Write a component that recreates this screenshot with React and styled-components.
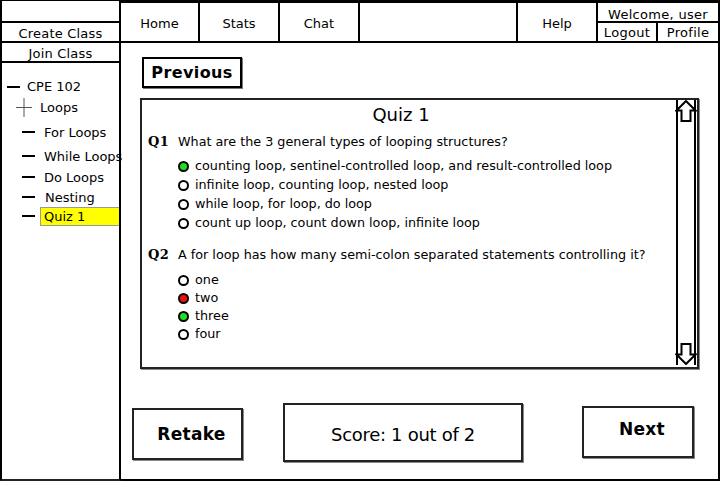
import React from 'react';
import styled, { createGlobalStyle } from 'styled-components';

const GlobalStyle = createGlobalStyle`
  html, body {
    margin: 0;
    padding: 0;
    background: #fff;
  }
  * {
    box-sizing: border-box;
  }
  body {
    font-family: "DejaVu Sans", Verdana, sans-serif;
    color: #000;
  }
`;

const questions = [
  {
    label: 'Q1',
    text: 'What are the 3 general types of looping structures?',
    options: [
      { text: 'counting loop, sentinel-controlled loop, and result-controlled loop', mark: 'right' },
      { text: 'infinite loop, counting loop, nested loop' },
      { text: 'while loop, for loop, do loop' },
      { text: 'count up loop, count down loop, infinite loop' },
    ],
  },
  {
    label: 'Q2',
    text: 'A for loop has how many semi-colon separated statements controlling it?',
    options: [
      { text: 'one' },
      { text: 'two', mark: 'wrong' },
      { text: 'three', mark: 'right' },
      { text: 'four' },
    ],
  },
];

// spacing above each lesson differs a little in the mockup
const lessons = [
  { name: 'For Loops', top: 6 },
  { name: 'While Loops', top: 6 },
  { name: 'Do Loops', top: 3 },
  { name: 'Nesting', top: 2, nudge: 3 },
  { name: 'Quiz 1', top: 1, active: true },
];

const App = () => {
  return (
    <>
      <GlobalStyle />
      <Frame>
        <Sidebar>
          <SideRow $height={23} $first />
          <SideRow $height={20}>Create Class</SideRow>
          <SideRow $height={20}>Join Class</SideRow>
          <Tree>
            <TreeItem $indent={7} $top={12}>
              <Dash />
              <span>CPE 102</span>
            </TreeItem>
            <TreeItem $indent={16} $top={2}>
              <Plus viewBox="0 0 16 19">
                <path d="M0 9.5 H16 M8 0 V19" stroke="#555" strokeWidth="1" fill="none" />
              </Plus>
              <LoopsLabel>Loops</LoopsLabel>
            </TreeItem>
            {lessons.map((l) => (
              <TreeItem key={l.name} $indent={22} $top={l.top} $child>
                <Dash />
                <Leaf $active={l.active} $nudge={l.nudge}>{l.name}</Leaf>
              </TreeItem>
            ))}
          </Tree>
        </Sidebar>

        <Main>
          <TopNav>
            <NavItem $width={79}>Home</NavItem>
            <NavItem $width={80}>Stats</NavItem>
            <NavItem $width={80}>Chat</NavItem>
            <NavItem $grow />
            <NavItem $width={80}>Help</NavItem>
            <UserBox>
              <Welcome>Welcome, user</Welcome>
              <UserLinks>
                <UserLink $width={60}>Logout</UserLink>
                <UserLink $last>Profile</UserLink>
              </UserLinks>
            </UserBox>
          </TopNav>

          <Content>
            <PrevButton>Previous</PrevButton>

            <QuizPanel>
              <QuizBody>
                <QuizTitle>Quiz 1</QuizTitle>
                {questions.map((q, i) => (
                  <Question key={q.label} $first={i === 0}>
                    <QuestionLine>
                      <QLabel>{q.label}</QLabel>
                      <span>{q.text}</span>
                    </QuestionLine>
                    <Options $tight={i === 1}>
                      {q.options.map((o) => (
                        <Option key={o.text}>
                          <Radio $mark={o.mark} />
                          <span>{o.text}</span>
                        </Option>
                      ))}
                    </Options>
                  </Question>
                ))}
              </QuizBody>
              <ScrollBar>
                <Arrow viewBox="0 0 22 22">
                  <path d="M11 1 L20.5 10.5 L15.5 10.5 L15.5 21 L6.5 21 L6.5 10.5 L1.5 10.5 Z" fill="#fff" stroke="#000" strokeWidth="2" strokeLinejoin="miter" />
                </Arrow>
                <Arrow viewBox="0 0 22 22">
                  <path d="M11 21 L20.5 11.5 L15.5 11.5 L15.5 1 L6.5 1 L6.5 11.5 L1.5 11.5 Z" fill="#fff" stroke="#000" strokeWidth="2" strokeLinejoin="miter" />
                </Arrow>
              </ScrollBar>
            </QuizPanel>

            <ActionRow>
              <ActionButton $width={111} $height={52} $top={39} $bold>Retake</ActionButton>
              <ActionButton $width={240} $height={59} $top={34} $gap={40} $shift={2}>Score: 1 out of 2</ActionButton>
              <ActionButton $width={112} $height={52} $top={37} $gap={59} $bold $shift={-3}>Next</ActionButton>
            </ActionRow>
          </Content>
        </Main>
      </Frame>
    </>
  );
};

const Frame = styled.div`
  display: flex;
  width: 720px;
  height: 481px;
  font-size: 13px;
`;

const Sidebar = styled.div`
  width: 121px;
  flex-shrink: 0;
  display: flex;
  flex-direction: column;
  border-left: 2px solid #000;
  border-right: 2px solid #000;
  border-bottom: 2px solid #222;
`;

const SideRow = styled.div`
  height: ${(p) => p.$height}px;
  border-bottom: 2px solid #000;
  border-top: ${(p) => (p.$first ? '1px solid #000' : 'none')};
  display: flex;
  align-items: center;
  justify-content: center;
  padding-top: 3px;
  letter-spacing: 0.2px;
`;

const Tree = styled.div`
  display: flex;
  flex-direction: column;
  padding-top: 2px;
`;

const TreeItem = styled.div`
  display: flex;
  align-items: center;
  height: ${(p) => (p.$child ? 18 : 19)}px;
  margin-top: ${(p) => p.$top}px;
  padding-left: ${(p) => p.$indent - 2}px;
  gap: 7px;
  white-space: nowrap;
`;

const Dash = styled.span`
  display: inline-block;
  width: 13px;
  height: 2px;
  background: #000;
  flex-shrink: 0;
`;

const Plus = styled.svg`
  width: 16px;
  height: 19px;
  flex-shrink: 0;
`;

const LoopsLabel = styled.span`
  margin-left: 1px;
`;

const Leaf = styled.span`
  display: inline-block;
  height: 19px;
  padding-left: ${(p) => (p.$active ? 3 : 0)}px;
  margin-left: ${(p) => (p.$active ? -2 : p.$nudge || 2)}px;
  width: ${(p) => (p.$active ? '83px' : 'auto')};
  background: ${(p) => (p.$active ? '#ffff00' : 'transparent')};
  border: ${(p) => (p.$active ? '1px solid #999' : 'none')};
  border-right: none;
  line-height: ${(p) => (p.$active ? '17px' : '19px')};
`;

const Main = styled.div`
  flex: 1;
  display: flex;
  flex-direction: column;
  border-right: 2px solid #000;
  border-bottom: 2px solid #000;
  border-top: 1px solid #000;
`;

const TopNav = styled.div`
  display: flex;
  height: 42px;
  border-top: 2px solid #000;
  border-bottom: 2px solid #000;
`;

const NavItem = styled.div`
  width: ${(p) => (p.$grow ? 'auto' : `${p.$width}px`)};
  flex: ${(p) => (p.$grow ? 1 : '0 0 auto')};
  border-right: 2px solid #000;
  display: flex;
  align-items: center;
  justify-content: center;
  padding-top: 2px;
`;

const UserBox = styled.div`
  width: 120px;
  display: flex;
  flex-direction: column;
`;

const Welcome = styled.div`
  height: 20px;
  border-bottom: 2px solid #000;
  display: flex;
  align-items: center;
  justify-content: center;
  padding-top: 5px;
  letter-spacing: 0.3px;
`;

const UserLinks = styled.div`
  display: flex;
  flex: 1;
`;

const UserLink = styled.div`
  width: ${(p) => (p.$width ? `${p.$width}px` : 'auto')};
  flex: ${(p) => (p.$last ? 1 : '0 0 auto')};
  border-right: ${(p) => (p.$last ? 'none' : '2px solid #000')};
  display: flex;
  align-items: center;
  justify-content: center;
  padding-top: 1px;
  letter-spacing: 0.3px;
`;

const Content = styled.div`
  flex: 1;
  display: flex;
  flex-direction: column;
  padding: 14px 0 0 19px;
`;

const PrevButton = styled.div`
  width: 100px;
  height: 31px;
  margin-left: 2px;
  border: 2px solid #000;
  display: flex;
  align-items: center;
  justify-content: center;
  font-weight: bold;
  font-size: 16px;
  letter-spacing: 0.4px;
  box-shadow: 1px 1px 0 #777;
`;

const QuizPanel = styled.div`
  margin-top: 10px;
  width: 559px;
  height: 271px;
  border: 2px solid #222;
  box-shadow: 1px 1px 0 #888;
  display: flex;
`;

const QuizBody = styled.div`
  flex: 1;
  padding: 3px 0 0 6px;
  font-size: 12.75px;
`;

const QuizTitle = styled.div`
  text-align: center;
  font-size: 18px;
  padding-right: 22px;
  height: 24px;
  line-height: 24px;
`;

const Question = styled.div`
  margin-top: ${(p) => (p.$first ? 5 : 14)}px;
`;

const QuestionLine = styled.div`
  display: flex;
  align-items: center;
  height: 18px;
`;

const QLabel = styled.span`
  font-family: "DejaVu Serif", serif;
  font-weight: bold;
  font-size: 13px;
  width: 30px;
  letter-spacing: 0.5px;
`;

const Options = styled.div`
  display: flex;
  flex-direction: column;
  padding-left: 30px;
  margin-top: ${(p) => (p.$tight ? 7 : 6)}px;
  gap: ${(p) => (p.$tight ? 0 : 1)}px;
`;

const Option = styled.div`
  display: flex;
  align-items: center;
  height: 18px;
  gap: 6px;
`;

const Radio = styled.span`
  width: 11px;
  height: 11px;
  border-radius: 50%;
  border: 2px solid #000;
  margin-top: 2px;
  flex-shrink: 0;
  background: ${(p) =>
    p.$mark === 'right' ? '#22dd22' : p.$mark === 'wrong' ? '#ee1111' : '#fff'};
`;

const ScrollBar = styled.div`
  width: 20px;
  margin: 0 1px 2px 0;
  border-left: 2px solid #000;
  border-right: 2px solid #000;
  display: flex;
  flex-direction: column;
  justify-content: space-between;
  align-items: center;
`;

const Arrow = styled.svg`
  width: 22px;
  height: 22px;
  flex-shrink: 0;
`;

const ActionRow = styled.div`
  display: flex;
  align-items: flex-start;
  margin-left: -8px;
`;

const ActionButton = styled.div`
  width: ${(p) => p.$width}px;
  height: ${(p) => p.$height}px;
  margin-top: ${(p) => p.$top}px;
  margin-left: ${(p) => p.$gap || 0}px;
  border: 2px solid #222;
  box-shadow: 1px 1px 0 #888;
  display: flex;
  align-items: center;
  justify-content: center;
  padding-top: ${(p) => (p.$shift > 0 ? p.$shift * 2 : 0)}px;
  padding-bottom: ${(p) => (p.$shift < 0 ? -p.$shift * 2 : 0)}px;
  font-size: ${(p) => (p.$bold ? 17 : 18)}px;
  font-weight: ${(p) => (p.$bold ? 'bold' : 'normal')};
  letter-spacing: ${(p) => (p.$bold ? '0.3px' : '-0.3px')};
  padding-left: ${(p) => (p.$bold ? 8 : 0)}px;
`;

export default App;
